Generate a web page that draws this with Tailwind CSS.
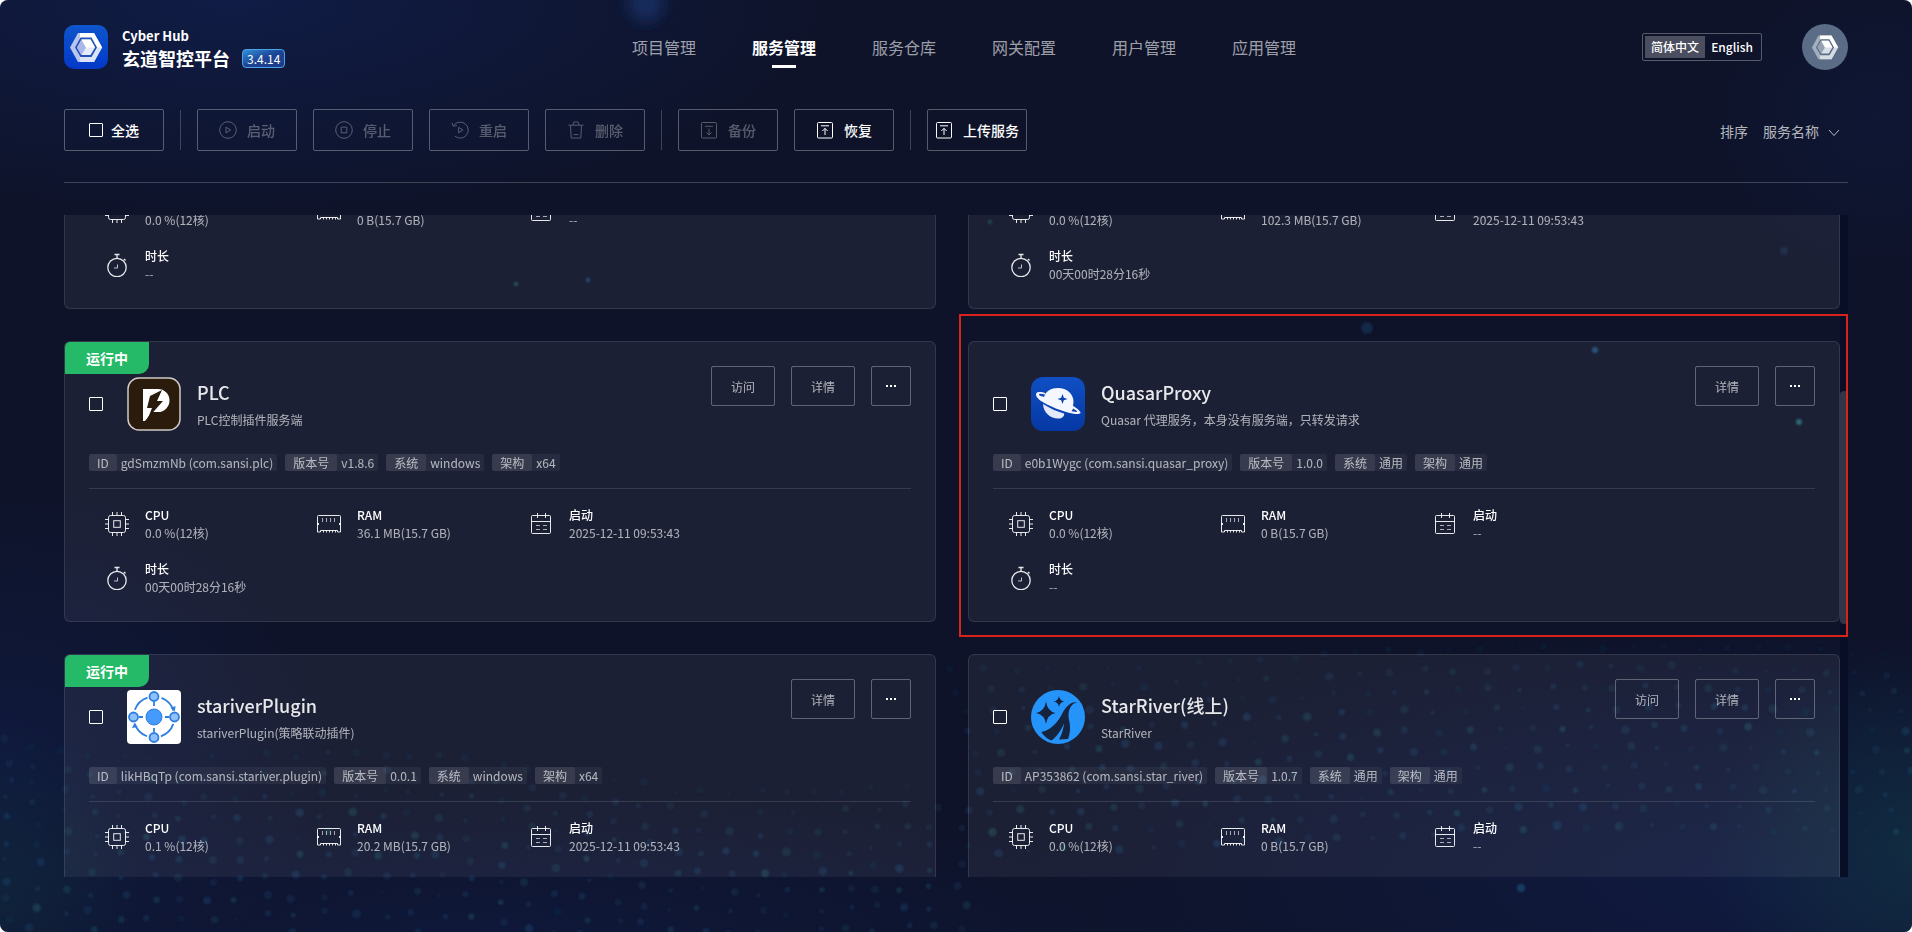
<!DOCTYPE html>
<html lang="zh-CN">
<head>
  <meta charset="UTF-8">
  <meta name="viewport" content="width=device-width, initial-scale=1.0">
  <title>玄道智控平台</title>
  <script src="https://cdn.jsdelivr.net/npm/@tailwindcss/browser@4"></script>
  <style>
    body { font-family: "Noto Sans CJK SC", "Noto Sans", sans-serif; }
  </style>
</head>
<body class="bg-white">
  <!-- Iconos compartidos -->
  <svg class="absolute size-0">
    <symbol id="i-play" viewBox="0 0 18 18"><circle cx="9" cy="9" r="8.3"/><path d="M7 6.2v5.6L11.6 9z"/></symbol>
    <symbol id="i-stop" viewBox="0 0 18 18"><circle cx="9" cy="9" r="8.3"/><path d="M6.2 6.2h5.6v5.6H6.2z"/></symbol>
    <symbol id="i-restart" viewBox="0 0 18 18"><path d="M2.6 4.6A8 8 0 1 1 3.8 15M1 1.8l1.200 3.400 3.600-.600M7.600 6.400v5.400L12 9z"/></symbol>
    <symbol id="i-trash" viewBox="0 0 18 18"><path d="M1.500 4.200h15M5.800 4 7 1h4l1.200 3M3.500 4.400 4.200 17h9.600l.7-12.600M6.600 13.600h4.800"/></symbol>
    <symbol id="i-backup" viewBox="0 0 18 18"><rect x="1.500" y="1.500" width="15" height="15.500" rx="1"/><path d="M5 5.300h8M9 7.600V14M6.400 11.400 9 14l2.600-2.600"/></symbol>
    <symbol id="i-upload" viewBox="0 0 18 18"><rect x="1.500" y="1.500" width="15" height="15.500" rx="1"/><path d="M5 4.800h8M9 14V7.400M6.400 10 9 7.400l2.600 2.600"/></symbol>
    <symbol id="i-cpu" viewBox="0 0 24 24"><rect x="3.500" y="3.500" width="17" height="17" rx="2"/><rect x="8.700" y="8.700" width="6.600" height="6.600"/><path d="M7.500 0v3.500M12 0v3.500M16.500 0v3.500M7.500 20.500V24M12 20.500V24M16.500 20.500V24M0 7.500h3.500M0 12h3.500M0 16.500h3.500M20.500 7.500H24M20.500 12H24M20.500 16.500H24"/></symbol>
    <symbol id="i-ram" viewBox="0 0 24 24"><path d="M1.500 3.500h21q1 0 1 1v15.500h-3v-1.500h-17V20h-3V4.500q0-1 1-1z"/><path d="M0 12h2M22 12h2" stroke-width="2"/><path d="M5.500 6v4M9.500 6v4M13.500 6v4M17.500 6v4" stroke-opacity=".7"/><path d="M6.500 18.500v2M9.500 18.500v2M12.500 18.500v2M15.500 18.500v2M18.500 18.500v2"/></symbol>
    <symbol id="i-cal" viewBox="0 0 24 24"><rect x="2.500" y="3.500" width="19" height="18" rx="1"/><path d="M2 9.500h20M8.500 1v5M16.500 1v5"/><path stroke-opacity=".7" d="M7 13.500h4M14 13.500h4M7 17.500h4M14 17.500h4"/></symbol>
    <symbol id="i-timer" viewBox="0 0 24 24"><g stroke-width="1.300"><circle cx="12" cy="14.500" r="9.200"/><path d="M9.500 1.500h5M12 1.500v3.700M19 6l1.500 1.500"/></g><path stroke-opacity=".8" d="M12.500 11.500v3.500H9"/></symbol>
    <symbol id="i-hub" viewBox="0 0 44 44">
      <path fill="#b9c5ec" d="M14 8h16l8.200 14.500L30 37H14L6 22.500z"/>
      <path fill="#dbe3f8" d="M16 32h11l5-10h6.200L30 37H16z"/>
      <path fill="#fff" d="M16 8h14l8.200 14.500h-6L27 13H16z"/>
      <path fill="#2450b8" d="M16.500 12.500h11l5.500 10-5.500 9.500h-11L11 22.500z"/>
      <path fill="#e6ecfb" d="M17.500 14.500h9l4.500 8-4.500 7.500h-9L13 22.500z"/>
      <path fill="#a9b8e8" d="M17.500 14.500 22 22.500 17.500 30 13 22.500z"/>
      <path fill="#fff" d="M17.500 14.500h9l4.500 8h-9z"/>
    </symbol>
    <symbol id="i-hub-gray" viewBox="0 0 44 44">
      <path fill="#a3afbd" d="M14 8h16l8.200 14.500L30 37H14L6 22.500z"/>
      <path fill="#d5dce4" d="M16 31h11l5-9h6.200L30 37H16z"/>
      <path fill="#fff" d="M16 8h14l8.200 14.500h-6L27 13H16z"/>
      <path fill="#5b6c86" d="M16.500 12.500h11l5.500 10-5.500 9.500h-11L11 22.500z"/>
      <path fill="#d9dfe7" d="M17.500 14.500h9l4.500 8-4.500 7.500h-9L13 22.500z"/>
      <path fill="#94a1b4" d="M17.500 14.500 22 22.500 17.500 30 13 22.500z"/>
      <path fill="#fff" d="M17.500 14.500h9l4.500 8h-9z"/>
    </symbol>
    <symbol id="logo-plc" viewBox="0 0 54 54">
      <rect x="1" y="1" width="52" height="52" rx="11" fill="#2b1b0d" stroke="#cfc9c4" stroke-width="1.500"/>
      <path fill="#fff" d="M16 12h15a11.500 11.500 0 0 1 0 23h-6l-7 9h-2z"/>
      <path fill="#2b1b0d" d="M35 13 23 19l-3 12h5l-4 10 15-17h-6z"/>
    </symbol>
    <symbol id="logo-quasar" viewBox="0 0 54 54">
      <defs><linearGradient id="gq" x1="0" y1="0" x2="0" y2="1"><stop offset="0" stop-color="#0f4fc4"/><stop offset="1" stop-color="#0538a4"/></linearGradient></defs>
      <rect width="54" height="54" rx="12" fill="url(#gq)"/>
      <path fill="#f4f7ff" d="M13 20C15 14 20 11 27 11c9 0 15.500 6 15.500 14l-.5 4c4 2 7 5 7.500 6.500.4 1.500-3 2-8 1C32 35 17 28.500 10 24c-4-3-6-6-4.500-8 1.500-1.800 6-1 9 0l-.8 1.600c-3-.8-5.200-1-5.700-.3-.5.900 1.500 2 5 2.700z"/>
      <path fill="#0a42b2" d="M42 31.500c2.500 1.200 4 2.500 4 3.200-.5.500-3 .2-5.500-.4.700-.8 1.200-1.800 1.500-2.800z"/>
      <path fill="#e3e9fa" d="M12 27c7 4.500 14 7.500 21 9.500 1 2-1.500 4.500-4 5-8.500 1-16.500-5-17-14.500z"/>
      <path fill="#0a42b2" d="m31.500 17 1.300 3.700 3.700 1.300-3.700 1.300-1.300 3.700-1.300-3.700-3.700-1.300 3.700-1.300z"/>
    </symbol>
    <symbol id="logo-plugin" viewBox="0 0 54 54">
      <rect width="54" height="54" rx="4" fill="#fff"/>
      <g fill="none" stroke="#2f7fe0" stroke-width="1.800">
        <circle cx="27" cy="27" r="20.500" stroke-dasharray="18 14.200" stroke-dashoffset="-7"/>
        <path d="M27 12v4M27 38v4M12 27h4M38 27h4"/>
        <g fill="#8ec1fb"><circle cx="27" cy="6.500" r="4.500"/><circle cx="27" cy="47.500" r="4.500"/><circle cx="6.500" cy="27" r="4.500"/><circle cx="47.500" cy="27" r="4.500"/></g>
      </g>
      <circle cx="27" cy="27" r="8" fill="#469afc" stroke="#2f7fe0"/>
      <path fill="#2f7fe0" d="m43.500 18 5-2-.5 5zM5 38l2.500-5 3 4z"/>
    </symbol>
    <symbol id="logo-star" viewBox="0 0 54 54">
      <circle cx="27" cy="27" r="27" fill="#2494fb"/>
      <path fill="#15233f" d="M15 11.500q1.500 10 9.500 11.500-8 1.500-9.500 11Q13.500 24.500 5 23q8.500-1.500 10-11.500zM28 6q.7 4.800 5.500 5.500-4.800.7-5.500 5.500-.7-4.800-5.500-5.500Q27.300 10.800 28 6zM46.500 12C38 14 36 24 38.500 32c1 6 .5 12-1.500 17l-9 .5c3-5 4.500-11 5-16-3 7-8 14-12.500 17C16 49 12 45 10.500 42 20 40 27 32 31 24c4-8 9-12.500 15.500-12z"/>
    </symbol>
  </svg>

  <div class="relative isolate flex h-screen flex-col overflow-hidden rounded-lg bg-[#0e1329] px-16 text-white">
    <!-- Fondo -->
    <svg id="bg" class="absolute inset-0 -z-10 h-full w-full" viewBox="0 0 1912 932" preserveAspectRatio="none">
      <defs>
        <radialGradient id="g-blue"><stop offset="0" stop-color="#112052" stop-opacity=".7"/><stop offset="1" stop-color="#112052" stop-opacity="0"/></radialGradient>
        <radialGradient id="g-teal"><stop offset="0" stop-color="#123844" stop-opacity=".6"/><stop offset="1" stop-color="#123844" stop-opacity="0"/></radialGradient>
        <filter id="soft"><feGaussianBlur stdDeviation="1"/></filter>
        <filter id="softer" x="-1" y="-1" width="3" height="3"><feGaussianBlur stdDeviation="7"/></filter>
      </defs>
      <ellipse cx="230" cy="0" rx="620" ry="220" fill="url(#g-blue)"/>
      <ellipse cx="1880" cy="120" rx="180" ry="160" fill="url(#g-blue)" opacity=".4"/>
      <ellipse cx="0" cy="760" rx="330" ry="280" fill="url(#g-blue)" opacity=".7"/>
      <ellipse cx="1780" cy="880" rx="760" ry="260" fill="url(#g-blue)" opacity=".8"/>
      <ellipse cx="500" cy="940" rx="700" ry="150" fill="url(#g-blue)" opacity=".6"/>
      <ellipse cx="1912" cy="850" rx="200" ry="200" fill="url(#g-teal)"/>
      <ellipse cx="0" cy="880" rx="140" ry="160" fill="url(#g-teal)" opacity=".6"/>
      <circle cx="646" cy="4" r="18" fill="#16295c" filter="url(#softer)"/>
      <g id="dots" filter="url(#soft)"></g>
    </svg>

    <header class="flex h-[94px] shrink-0 items-center justify-between">
      <div class="flex flex-1 items-center gap-[14px]">
        <svg class="size-11 rounded-[10px] bg-linear-to-b from-[#0f55cc] to-[#0538c8]"><use href="#i-hub"/></svg>
        <div class="pt-[2px]">
          <p class="text-[13px] leading-5 font-bold">Cyber Hub</p>
          <div class="flex items-center gap-3">
            <h1 class="text-lg leading-6 font-bold">玄道智控平台</h1>
            <span class="rounded-sm border border-[#4aa3ea] bg-linear-to-br from-[#3490dc] via-[#1d4494] to-[#1c3a86] px-1 text-xs leading-[17px]">3.4.14</span>
          </div>
        </div>
      </div>
      <nav class="ml-4 flex gap-14 text-base leading-6 text-white/60">
        <a href="#">项目管理</a>
        <a href="#" class="relative font-bold text-white">服务管理<span class="absolute top-[30px] left-5 h-[3px] w-6 bg-white"></span></a>
        <a href="#">服务仓库</a>
        <a href="#">网关配置</a>
        <a href="#">用户管理</a>
        <a href="#">应用管理</a>
      </nav>
      <div class="flex flex-1 items-center justify-end gap-10">
        <div class="flex rounded-xs border border-white/30 p-[2px] text-xs leading-[22px] font-medium">
          <button class="bg-white/25 px-[6px]">简体中文</button>
          <button class="px-[6px]">English</button>
        </div>
        <button class="flex size-[46px] items-center justify-center rounded-full bg-[#5b6c86]" aria-label="账户"><svg class="size-9"><use href="#i-hub-gray"/></svg></button>
      </div>
    </header>

    <div class="mt-[15px] flex shrink-0 items-center border-b border-white/20 pb-[31px] text-sm font-medium">
      <div id="toolbar" class="flex items-center gap-4"></div>
      <div class="ml-auto flex items-center gap-[15px] pt-[2px] font-normal text-white/70">
        <label for="sort">排序</label>
        <div class="relative">
          <select id="sort" class="w-[85px] appearance-none bg-transparent leading-5 outline-none"><option>服务名称</option></select>
          <svg class="pointer-events-none absolute top-[6px] right-2 size-3 fill-none stroke-current" viewBox="0 0 12 12"><path d="m1 3 5 5.500L11 3"/></svg>
        </div>
      </div>
    </div>

    <div class="relative mt-8 mb-[55px] min-h-0 flex-1">
      <div class="absolute inset-y-0 right-0 w-2 bg-[#080e26]">
        <div class="absolute top-[176px] h-[233px] w-2 rounded-full bg-[#303648]"></div>
      </div>
      <main class="relative h-full overflow-hidden pr-2">
        <div id="list" class="-mt-[187px] grid grid-cols-2 gap-8"></div>
      </main>
    </div>
  </div>

  <script>
    const tools = [
      { text: '全选', check: true },
      null,
      { text: '启动', icon: 'play', off: true },
      { text: '停止', icon: 'stop', off: true },
      { text: '重启', icon: 'restart', off: true },
      { text: '删除', icon: 'trash', off: true },
      null,
      { text: '备份', icon: 'backup', off: true },
      { text: '恢复', icon: 'upload' },
      null,
      { text: '上传服务', icon: 'upload' },
    ];

    const services = [
      { ram: '0 B', start: '--', time: '--' },
      { ram: '102.3 MB', start: '2025-12-11 09:53:43', time: '00天00时28分16秒' },
      { name: 'PLC', desc: 'PLC控制插件服务端', logo: 'plc', running: true, visit: true, id: 'gdSmzmNb (com.sansi.plc)', ver: 'v1.8.6', os: 'windows', arch: 'x64', ram: '36.1 MB', start: '2025-12-11 09:53:43', time: '00天00时28分16秒' },
      { name: 'QuasarProxy', desc: 'Quasar 代理服务，本身没有服务端，只转发请求', logo: 'quasar', marked: true, id: 'e0b1Wygc (com.sansi.quasar_proxy)', ver: '1.0.0', os: '通用', arch: '通用', ram: '0 B', start: '--', time: '--' },
      { name: 'stariverPlugin', desc: 'stariverPlugin(策略联动插件)', logo: 'plugin', running: true, id: 'likHBqTp (com.sansi.stariver.plugin)', ver: '0.0.1', os: 'windows', arch: 'x64', cpu: '0.1 %', ram: '20.2 MB', start: '2025-12-11 09:53:43' },
      { name: 'StarRiver(线上)', desc: 'StarRiver', logo: 'star', visit: true, id: 'AP353862 (com.sansi.star_river)', ver: '1.0.7', os: '通用', arch: '通用', ram: '0 B', start: '--' },
    ];

    const checkbox = (label) => `<input type="checkbox" aria-label="${label}" class="size-[14px] appearance-none rounded-[1px] border border-white checked:bg-white">`;

    document.getElementById('toolbar').innerHTML = tools.map((t) => {
      if (!t) return '<span class="h-10 w-px bg-white/20"></span>';
      if (t.check) return `<label class="flex h-[42px] w-[100px] items-center justify-center gap-2 rounded-xs border border-white/30">${checkbox(t.text)}${t.text}</label>`;
      return `<button ${t.off ? 'disabled' : ''} class="flex h-[42px] w-[100px] items-center justify-center gap-[10px] rounded-xs border border-white/30 whitespace-nowrap">
        <svg class="size-[18px] shrink-0 fill-none stroke-current ${t.off ? 'opacity-30' : ''}"><use href="#i-${t.icon}"/></svg>
        <span class="${t.off ? 'opacity-30' : ''}">${t.text}</span>
      </button>`;
    }).join('');

    const tag = (k, v) => `<div class="flex rounded-xs bg-white/5"><dt class="rounded-xs bg-white/8 px-2">${k}</dt><dd class="px-1">${v}</dd></div>`;

    const stat = (icon, k, v) => `<div class="flex w-[212px] items-center gap-4">
      <svg class="size-6 fill-none stroke-current text-white/90"><use href="#i-${icon}"/></svg>
      <div><dt class="font-medium">${k}</dt><dd class="text-white/65">${v}</dd></div>
    </div>`;

    const btn = 'h-10 rounded-xs border border-white/30';

    function head(s) {
      return `<div class="flex h-[65px] items-start justify-between">
          <div class="flex items-center pt-[11px]">
            ${checkbox(s.name)}
            <svg class="mr-4 ml-6 size-[54px]"><use href="#logo-${s.logo}"/></svg>
            <div>
              <h2 class="text-lg leading-7 font-medium text-white/90">${s.name}</h2>
              <p class="mt-1 text-xs leading-5 text-white/65">${s.desc}</p>
            </div>
          </div>
          <div class="flex gap-4 text-xs text-white/65">
            ${s.visit ? `<button class="${btn} w-16 pt-[2px]">访问</button>` : ''}
            <button class="${btn} w-16 pt-[2px]">详情</button>
            <button class="${btn} flex w-10 items-center justify-center gap-[2px]" aria-label="更多">
              <i class="size-[2px] bg-white"></i><i class="size-[2px] bg-white"></i><i class="size-[2px] bg-white"></i>
            </button>
          </div>
        </div>
        <dl class="mt-[23px] flex gap-2 text-xs leading-[17px] text-white/65">
          ${tag('ID', s.id)}${tag('版本号', s.ver)}${tag('系统', s.os)}${tag('架构', s.arch)}
        </dl>
        <hr class="mt-[17px] border-white/12">`;
    }

    document.getElementById('list').innerHTML = services.map((s) => `
      <article class="relative flex h-[281px] flex-col rounded-md border border-white/10 bg-white/6 p-6">
        ${s.running ? '<span class="absolute top-0 left-0 h-8 w-[84px] rounded-tl-[5px] rounded-br-[10px] bg-[#24ba67] text-center text-sm leading-8 font-bold">运行中</span>' : ''}
        ${s.marked ? '<div class="pointer-events-none absolute -top-7 -right-[9px] -bottom-4 -left-[10px] border-2 border-[#d8231b]"></div>' : ''}
        ${s.name ? head(s) : ''}
        <dl class="mt-auto mb-px flex h-[90px] flex-wrap content-start gap-y-[18px] px-4 text-xs leading-[18px]">
          ${stat('cpu', 'CPU', (s.cpu || '0.0 %') + '(12核)')}
          ${stat('ram', 'RAM', s.ram + '(15.7 GB)')}
          ${stat('cal', '启动', s.start)}
          ${s.time ? stat('timer', '时长', s.time) : ''}
        </dl>
      </article>`).join('');

    // Puntos del fondo
    const rnd = (n) => { const v = Math.sin(n * 127.1) * 43758.5453; return v - Math.floor(v); };
    const dots = [[516, 284, 2, 0.8], [588, 280, 2, 1], [1595, 350, 3, 1], [1799, 422, 3, 1], [1367, 328, 6, 0.4], [1784, 251, 4, 0.3], [990, 222, 2, 0.6], [1521, 888, 4, 0.7]];
    for (let r = 0; r < 10; r++) {
      for (let c = 0; c < 34; c++) {
        const k = r * 40 + c;
        const fade = Math.min(1, (r + 2) / 5);
        dots.push([950 + c * 31 + r * 5 + rnd(k) * 6, 660 + r * 20 + Math.cos(c / 6) * 8 - c * 0.4 + rnd(k + 9) * 6, 2 + rnd(k + 3) * 2.5, (0.1 + rnd(k + 5) * 0.28) * fade]);
        const x = c * 29 + rnd(k + 7) * 12;
        dots.push([x, 735 + r * 20 + x * 0.06 + Math.sin(x / 90) * 10 + rnd(k + 1) * 8, 2 + rnd(k + 2) * 2.5, (0.1 + rnd(k + 4) * 0.3) * fade]);
      }
    }
    document.getElementById('dots').innerHTML = dots.map(([x, y, r, o], i) =>
      `<circle cx="${x}" cy="${y}" r="${r}" fill="${i % 3 ? '#1f4c78' : '#23606c'}" opacity="${o}"/>`).join('');
  </script>
</body>
</html>
